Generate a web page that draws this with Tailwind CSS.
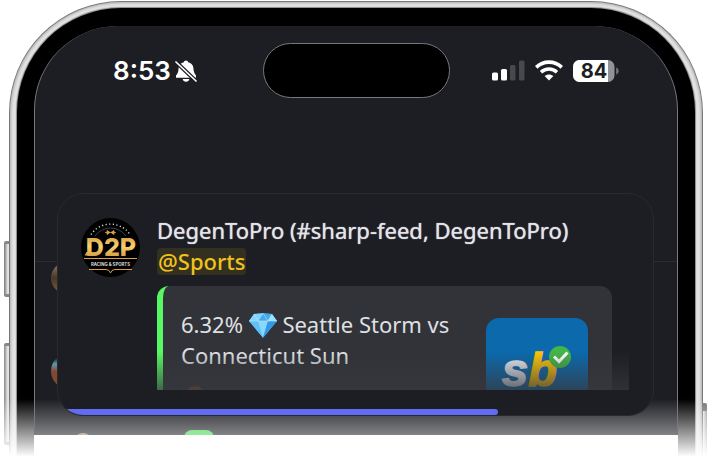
<!DOCTYPE html>
<html lang="en">
<head>
<meta charset="utf-8">
<meta name="viewport" content="width=device-width, initial-scale=1">
<title>DegenToPro notification</title>
<script src="https://cdn.jsdelivr.net/npm/@tailwindcss/browser@4"></script>
</head>
<body class="bg-white overflow-hidden">
<main class="relative overflow-hidden pt-px pl-[9px] pr-[7px] font-['Noto_Sans',sans-serif]">

  <!-- side buttons -->
  <div class="absolute left-1 top-[241px] h-14 w-2 rounded-l-xs border-y-3 border-[#888] bg-linear-to-r from-[#777] via-[#eee] to-[#999]"></div>
  <div class="absolute left-1 top-[343px] h-[102px] w-2 rounded-l-xs border-y-3 border-[#888] bg-linear-to-r from-[#888] via-[#eee] to-[#aaa]"></div>
  <div class="absolute right-[3px] top-[403px] h-14 w-2 rounded-r-xs border-t-8 border-[#777] bg-linear-to-r from-[#888] via-[#eee] to-[#999]"></div>

  <!-- metal frame -->
  <div class="relative rounded-t-[112px] border border-b-0 border-[#777] bg-[#e3e4e3] px-[7px] pt-1.5 shadow-[inset_0_0_3px_1px_#aaa]">
    <!-- bezel -->
    <div class="rounded-t-[104px] bg-black px-[17px] pt-[18px] shadow-[0_0_1px_1px_#888]">
      <!-- screen -->
      <div class="relative overflow-hidden rounded-t-[84px] border-x border-[#77787a] bg-[#1d1e23] pb-[19px]">

        <header class="grid grid-cols-[1fr_auto_1fr] items-center pt-[17px]">
          <div class="flex items-center gap-1 pl-[78px] text-white">
            <time class="font-[Inter,sans-serif] text-[26px] leading-8 font-semibold">8:53</time>
            <svg class="h-[22px] w-[22px]" viewBox="0 0 22 22" fill="none" role="img" aria-label="Silent">
              <path d="M11 0.5c1.2 0 2 .8 2.200 1.800C16 2.900 18.300 5 18.400 8c.1 3.500 1 5.500 2.600 7.500v2.300H1v-2.300C2.900 13.500 3.500 11.500 3.600 8c.1-3 2.400-5.100 5.200-5.700C9 1.300 9.800.5 11 .5Z" fill="#fff"/>
              <path d="M7.600 19h6.800c-.4 1.700-1.700 2.800-3.400 2.800s-3-1.100-3.400-2.800Z" fill="#fff"/>
              <path d="M0.500 1.500 21.500 21.500" stroke="#1d1e23" stroke-width="4"/>
              <path d="M1 2 21 21" stroke="#fff" stroke-width="1.700" stroke-linecap="round"/>
            </svg>
          </div>
          <div class="h-[55px] w-[187px] rounded-full border border-[#77787a] bg-black"></div>
          <div class="flex items-center justify-end gap-2.5 pr-[58px]">
            <svg class="h-[21px] w-[33px]" viewBox="0 0 33 21" role="img" aria-label="Signal">
              <rect x="0" y="12.500" width="6" height="8" rx="1.500" fill="#fff"/>
              <rect x="9" y="9" width="6" height="11.500" rx="1.500" fill="#fff"/>
              <rect x="18" y="5" width="5.500" height="15.500" rx="1.500" fill="#48494d"/>
              <rect x="27" y="0.500" width="5.500" height="20" rx="1.500" fill="#48494d"/>
            </svg>
            <svg class="h-[21px] w-7" viewBox="0 0 28 21" fill="none" stroke="#fff" role="img" aria-label="Wi-Fi">
              <path d="M1.200 7.300C8.300.4 19.700.4 26.800 7.300" stroke-width="3.700"/>
              <path d="M6 12.200c4.500-4.300 11.500-4.300 16 0" stroke-width="3.500"/>
              <path d="M14 20.500 9.600 16.100c2.400-2.300 6.400-2.300 8.800 0Z" fill="#fff" stroke="none"/>
            </svg>
            <svg class="h-[22px] w-[46px]" viewBox="0 0 46 22" role="img" aria-label="Battery 84%">
              <defs><clipPath id="cell"><rect width="41.500" height="22" rx="6.500"/></clipPath></defs>
              <g clip-path="url(#cell)"><rect width="42" height="22" fill="#929396"/><rect width="35" height="22" fill="#fff"/></g>
              <path d="M43.200 7.500c3.300 1.200 3.300 5.800 0 7Z" fill="#77787b"/>
              <text x="21" y="18" text-anchor="middle" font-family="Inter,sans-serif" font-size="20" font-weight="700" fill="#1d1e23">84</text>
            </svg>
          </div>
        </header>

        <!-- list behind the card -->
        <div class="absolute inset-x-0 top-[235px] h-px bg-[#2b2c31]"></div>
        <div class="absolute left-4 top-[236px] h-8 w-8 rounded-full bg-linear-to-b from-[#8a8070] via-[#4a3828] to-[#806038]"></div>
        <div class="absolute left-4 top-[327px] h-9 w-9 rounded-full bg-linear-to-b from-[#203020] from-15% via-[#4f98b8] via-30% to-[#804a30] to-50%"></div>
        <div class="absolute left-[149px] top-[404px] h-7 w-[30px] rounded-lg bg-[#40d850]"></div>
        <div class="absolute left-[38px] top-[407px] h-5 w-5 rounded-full bg-[#a08070]"></div>
        <div class="absolute inset-x-0 bottom-0 h-9 bg-linear-to-b from-white/0 to-white/45"></div>

        <article class="relative ml-[22px] mr-[23px] mt-[95px] overflow-hidden rounded-[26px] border border-[#292a2f] bg-[#1d1e23]">
          <div class="flex gap-[17px] pt-[21px] pr-6 pb-[19px] pl-[23px]">
            <svg class="mt-[3px] h-[59px] w-[59px] shrink-0" viewBox="0 0 59 59" role="img" aria-label="D2P Racing &amp; Sports">
              <defs>
                <linearGradient id="gold" x1="0" y1="0" x2="0" y2="1"><stop offset="0" stop-color="#c98a35"/><stop offset=".5" stop-color="#f8d070"/><stop offset="1" stop-color="#c8862f"/></linearGradient>
              </defs>
              <circle cx="29.500" cy="29.500" r="29.500" fill="#000"/>
              <path d="M10 16.500A23.500 23.500 0 0 1 49 16.500" fill="none" stroke="#d8d8d8" stroke-width="1.400" stroke-dasharray="1.200 2.400"/>
              <path d="M14 18A19 19 0 0 1 45 18" fill="none" stroke="#384047" stroke-width="1"/>
              <path d="M24 14.500h11M26 12.500l3 2-3 2ZM33 12.500l-3 2 3 2Z" fill="#d8a23e" stroke="#d8a23e" stroke-width=".8"/>
              <path d="M3.500 37.500 5.500 34h6l-1 3.500Z" fill="#e0a040"/>
              <text x="30" y="37.500" text-anchor="middle" font-family="Inter,sans-serif" font-size="25" font-weight="800" fill="url(#gold)">D2P</text>
              <path d="M3 40.500h53M8 51.500h17l3 1 1.500 2.500 1.500-2.500 3-1h17" fill="none" stroke="#d9a144" stroke-width="1"/>
              <text x="29.500" y="47.500" text-anchor="middle" font-family="Inter,sans-serif" font-size="4.300" font-weight="700" fill="#ddd">RACING &amp; SPORTS</text>
            </svg>
            <div class="min-w-0 flex-1 text-[22px] leading-[31px]">
              <h1 class="whitespace-nowrap text-[#e3e4e8] [text-shadow:0_0_1px_#e3e4e8]">DegenToPro (#sharp-feed, DegenToPro)</h1>
              <p class="flex h-[31px] items-center"><a href="#sports" class="rounded-sm bg-[#34301f] px-px leading-[27px] font-medium text-[#f0c21c]">@Sports</a></p>

              <div class="relative mt-[9px] h-[104px] overflow-hidden">
                <section class="mr-[17px] flex h-40 justify-between rounded-xl border-l-6 border-[#57f863] bg-[#323338]">
                  <h2 class="pt-[23px] pl-[18px] whitespace-nowrap text-[#dfe0e4]">6.32%
                    <svg class="inline-block h-[25px] w-7 align-[-5px]" viewBox="0 0 28 25" role="img" aria-label="gem">
                      <path d="M5 1 14 .3 23 1l5 7-14 16.700L0 8Z" fill="#4cb4f4"/>
                      <path d="M5 1 14 .3 9 8H0Z" fill="#82d4ff"/><path d="m14 .3 9 .7-4 7H9Z" fill="#48a9e8"/>
                      <path d="M23 1l5 7h-9Z" fill="#9be0ff"/><path d="M0 8h9l5 16.700Z" fill="#60c0f8"/>
                      <path d="M9 8h10l-5 16.700Z" fill="#8bd8ff"/><path d="M19 8h9L14 24.700Z" fill="#3598e6"/>
                      <path d="M0 8h28M5 1l4 7 5-7.700L19 8l4-7" stroke="#c4efff" stroke-width=".5" fill="none"/>
                    </svg>
                    Seattle Storm vs<br>Connecticut Sun</h2>
                  <svg class="mt-8 mr-6 h-[102px] w-[102px] shrink-0" viewBox="0 0 102 102" role="img" aria-label="sb">
                    <rect width="102" height="102" rx="13" fill="#0b69ac"/>
                    <text x="16" y="68" font-family="'Liberation Sans',sans-serif" font-size="47" font-weight="700" font-style="italic" stroke-width="1.500" fill="#e8edf5" stroke="#e8edf5">s<tspan fill="#fcc20c" stroke="#fcc20c">b</tspan></text>
                    <circle cx="74" cy="39" r="11" fill="#43b649"/>
                    <path d="m68 38.500 5 5 8.500-9" fill="none" stroke="#fff" stroke-width="3"/>
                  </svg>
                </section>
                <div class="absolute bottom-[-20px] left-7 h-6 w-5 rounded-full bg-[#8a4a30]"></div>
                <div class="absolute inset-x-0 bottom-0 h-[38px] bg-linear-to-b from-[#37383d]/0 to-[#37383d]/75"></div>
              </div>
            </div>
          </div>
          <div class="h-1.5" role="progressbar" aria-label="Time left" aria-valuenow="74" aria-valuemin="0" aria-valuemax="100">
            <div class="h-full rounded-r-full bg-[#626cf2]" style="width:74%"></div>
          </div>
        </article>
      </div>
      <div class="h-8 bg-white"></div>
    </div>
  </div>

  <!-- frame fades out at both sides of the screen -->
  <div class="absolute bottom-0 left-0 h-[68px] w-[34px] bg-linear-to-b from-white/0 to-white to-85%"></div>
  <div class="absolute right-0 bottom-0 h-[68px] w-8 bg-linear-to-b from-white/0 to-white to-85%"></div>
</main>
</body>
</html>
